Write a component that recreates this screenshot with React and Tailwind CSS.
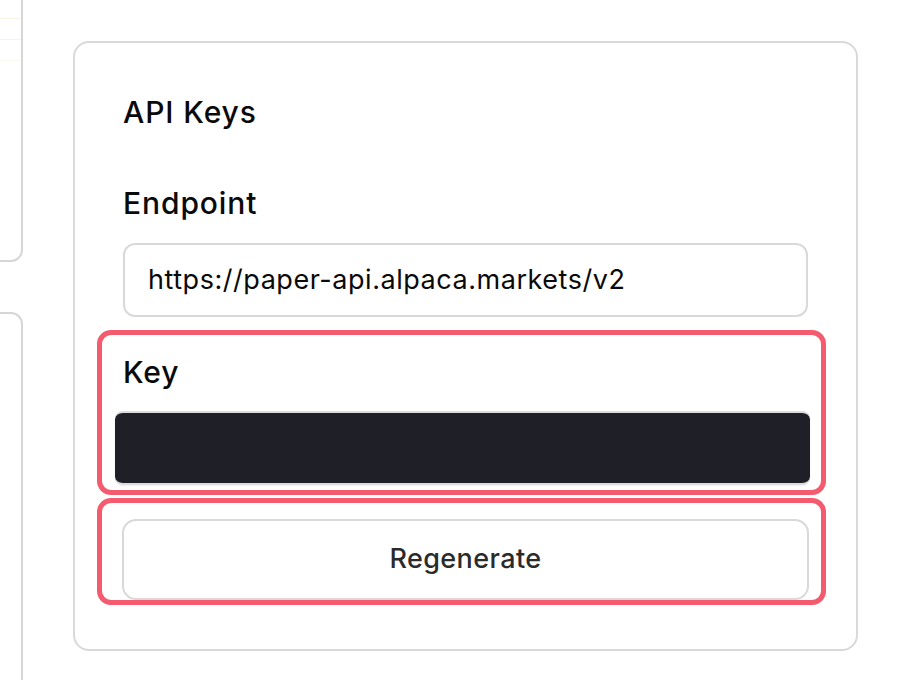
export default function App() {
  return (
    <div
      className="w-[924px] h-[680px] overflow-hidden bg-white flex flex-row items-start"
      style={{ fontFamily: "Inter, 'Noto Sans', sans-serif" }}
    >
      <div className="-ml-[300px] w-[323px] shrink-0 flex flex-col">
        <div className="-mt-[20px] h-[282px] shrink-0 border-2 border-[#d6d6d6] rounded-[12px] flex flex-col">
          <div className="h-[37px] shrink-0 border-b border-[#f8f3e4]" />
          <div className="h-[21px] shrink-0 border-b border-[#f8f3e4]" />
          <div className="h-[21px] shrink-0 border-b border-[#faf7ee]" />
        </div>
        <div className="mt-[50px] h-[500px] shrink-0 border-2 border-[#d6d6d6] rounded-[12px]" />
      </div>

      <div className="ml-[50px] mt-[41px] w-[785px] h-[610px] shrink-0 border-2 border-[#d9d9d9] rounded-[16px] px-[48px] pt-[49px] flex flex-col text-[#0a0a0a]">
        <div className="text-[30px] leading-[40px] font-medium tracking-[0.03em]">API Keys</div>
        <div className="mt-[51px] text-[30px] leading-[40px] font-medium tracking-[0.03em]">Endpoint</div>
        <div className="mt-[20px] h-[74px] shrink-0 border-2 border-[#d9d9d9] rounded-[12px] px-[23px] flex items-center text-[27px] tracking-[0.02em] text-[#0a0a0a]">
          https://paper-api.alpaca.markets/v2
        </div>

        <div className="mt-[13px] -ml-[26px] -mr-[18px] h-[165px] shrink-0 border-[5px] border-[#f45b6f] rounded-[14px] pt-[17px] flex flex-col">
          <div className="pl-[21px] text-[30px] leading-[40px] font-medium tracking-[0.03em]">Key</div>
          <div className="mt-[19px] ml-[13px] mr-[11px] h-[74px] shrink-0 bg-[#1e1f27] rounded-[8px] border-t-2 border-b-2 border-[#dcdcdc] shadow-[0_1px_2px_rgba(0,0,0,0.08)]" />
        </div>

        <div className="mt-[3px] -ml-[26px] -mr-[18px] h-[107px] shrink-0 border-[5px] border-[#f45b6f] rounded-[14px] pt-[16px] flex flex-col">
          <button className="ml-[20px] mr-[12px] h-[81px] shrink-0 border-2 border-[#d9d9d9] rounded-[14px] bg-white flex items-center justify-center text-[27px] font-medium tracking-[0.015em] text-[#2b2b2b]">
            Regenerate
          </button>
        </div>
      </div>
    </div>
  );
}
